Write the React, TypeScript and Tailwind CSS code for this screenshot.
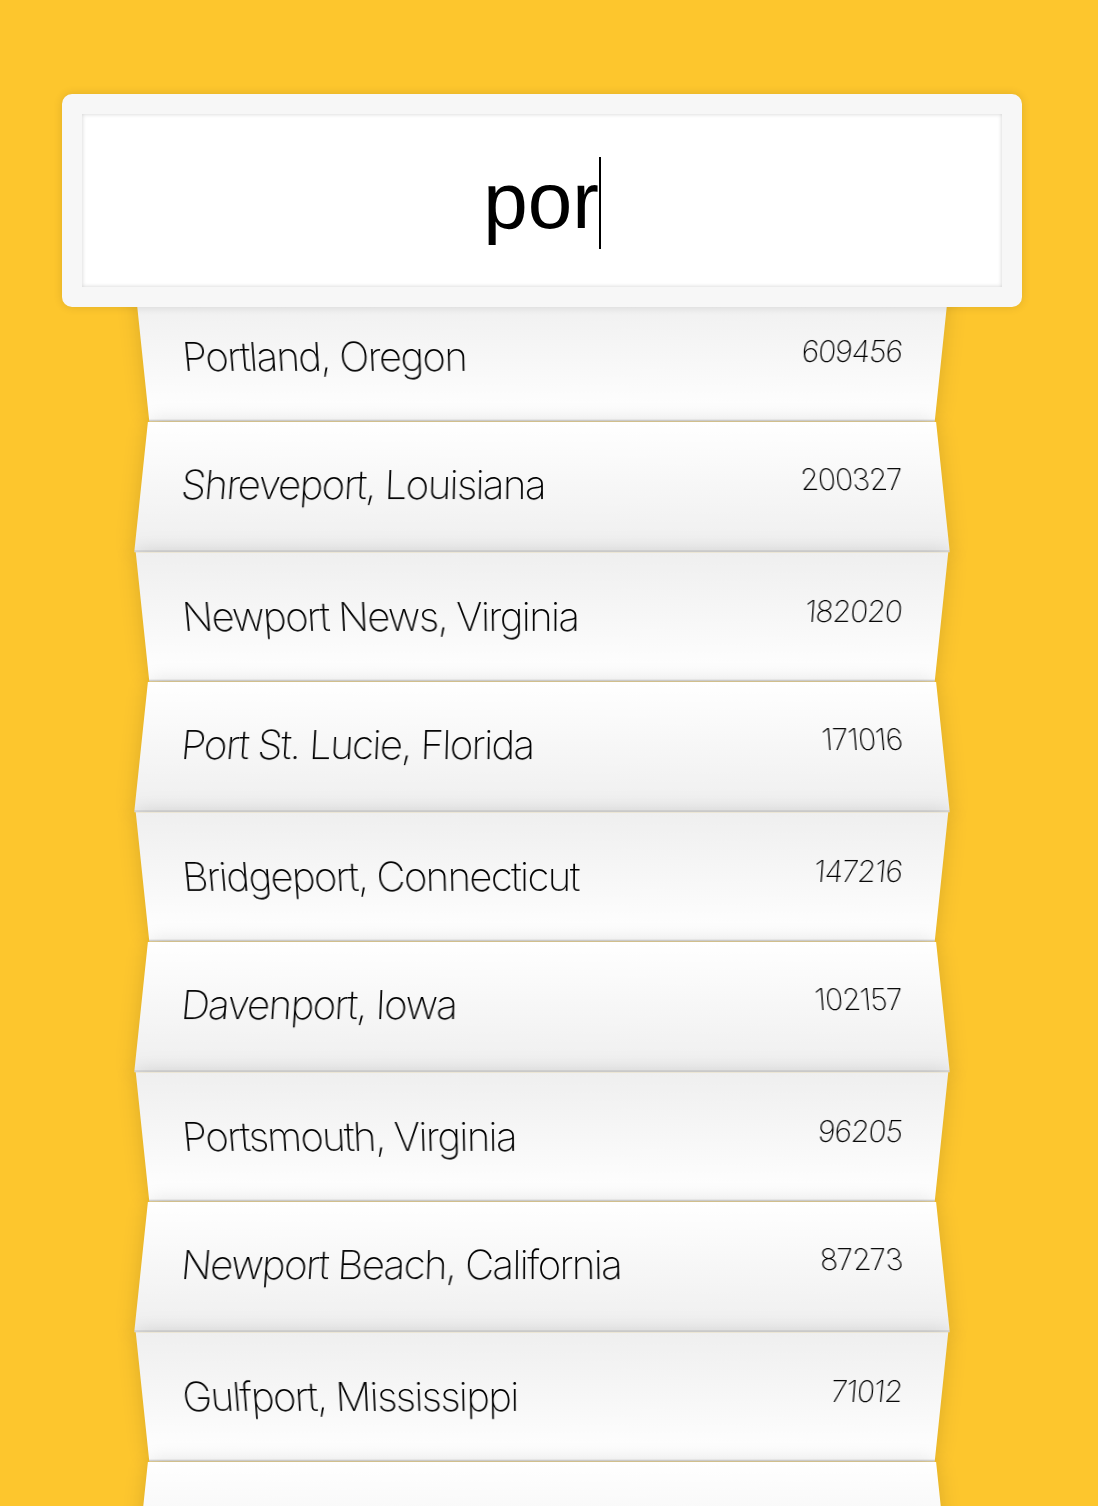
import React from "react";

interface City {
  name: string;
  population: number;
}

const cities: City[] = [
  { name: "Portland, Oregon", population: 609456 },
  { name: "Shreveport, Louisiana", population: 200327 },
  { name: "Newport News, Virginia", population: 182020 },
  { name: "Port St. Lucie, Florida", population: 171016 },
  { name: "Bridgeport, Connecticut", population: 147216 },
  { name: "Davenport, Iowa", population: 102157 },
  { name: "Portsmouth, Virginia", population: 96205 },
  { name: "Newport Beach, California", population: 87273 },
  { name: "Gulfport, Mississippi", population: 71012 },
  { name: "Port Arthur, Texas", population: 54135 },
];

// folded paper look: odd rows lean back, even rows lean forward
const oddRow =
  "[transform:perspective(200px)_rotateX(-3deg)_translateY(6px)] bg-linear-to-t from-white to-[#efefef]";
const evenRow =
  "[transform:perspective(200px)_rotateX(3deg)_translateY(4px)_scale(1.001)] bg-linear-to-b from-white to-[#efefef]";

export default function App() {
  return (
    <div className="min-h-screen bg-[#fdc62d] pr-[14px] font-['Inter',sans-serif] font-extralight text-black">
      <div className="mx-auto w-[800px] pt-[94px]">
        {/* Search box */}
        <div className="relative z-10 -mx-[80px] -mb-[20px] rounded-[10px] border-[20px] border-[#f7f7f7] bg-white shadow-[0_0_10px_rgba(0,0,0,0.12)]">
          <div className="flex h-[173px] items-center justify-center shadow-[inset_0_0_4px_rgba(0,0,0,0.19)]">
            <span className="font-['Liberation_Sans',Arial,sans-serif] text-[80px] font-normal leading-none">
              por
            </span>
            <span className="mt-[4px] h-[92px] w-[2px] bg-black" />
          </div>
        </div>

        {/* Suggestions */}
        <ul>
          {cities.map((city, i) => (
            <li
              key={city.name}
              className={`flex justify-between border-b-[2px] border-[#d8d8d8] p-[40px] shadow-[0_0_20px_rgba(0,0,0,0.14)] ${
                i % 2 === 0 ? oddRow : evenRow
              }`}
            >
              <span className="text-[40px] leading-[48px] tracking-[-1.6px] capitalize">{city.name}</span>
              <span className="text-[30px] leading-[36px] tracking-[-1px]">{city.population}</span>
            </li>
          ))}
        </ul>
      </div>
    </div>
  );
}
